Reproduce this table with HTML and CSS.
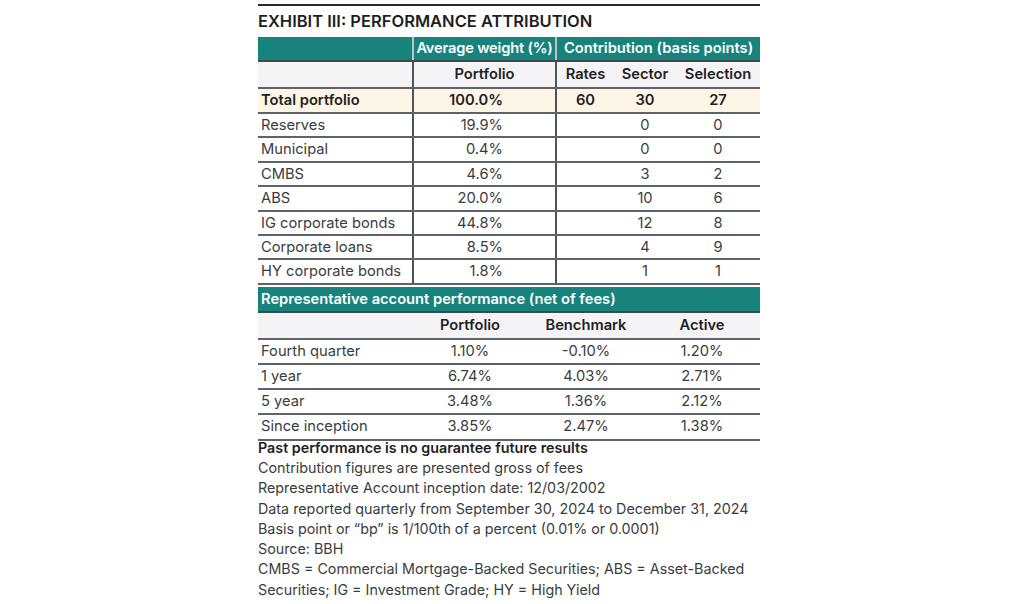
FILE: index.html
```html
<!DOCTYPE html>
<html lang="en">
<head>
<meta charset="utf-8">
<title>Exhibit III: Performance Attribution</title>
<link rel="stylesheet" href="styles.css">
</head>
<body>
<div class="exhibit">
  <h1 class="title">EXHIBIT III: PERFORMANCE ATTRIBUTION</h1>
  <table class="attr">
    <colgroup>
      <col class="c-label"><col class="c-weight"><col class="c-rates"><col class="c-sector"><col class="c-sel">
    </colgroup>
    <thead>
      <tr class="teal">
        <th></th>
        <th class="div tight">Average weight (%)</th>
        <th class="div" colspan="3">Contribution (basis points)</th>
      </tr>
      <tr class="sub">
        <th></th>
        <th class="div num">Portfolio</th>
        <th class="div ctr">Rates</th>
        <th class="ctr">Sector</th>
        <th class="ctr">Selection</th>
      </tr>
    </thead>
    <tbody>
      <tr class="total">
        <td>Total portfolio</td>
        <td class="div num">100.0%</td>
        <td class="div ctr">60</td>
        <td class="ctr">30</td>
        <td class="ctr">27</td>
      </tr>
      <tr><td>Reserves</td><td class="div num">19.9%</td><td class="div ctr"></td><td class="ctr">0</td><td class="ctr">0</td></tr>
      <tr><td>Municipal</td><td class="div num">0.4%</td><td class="div ctr"></td><td class="ctr">0</td><td class="ctr">0</td></tr>
      <tr><td>CMBS</td><td class="div num">4.6%</td><td class="div ctr"></td><td class="ctr">3</td><td class="ctr">2</td></tr>
      <tr><td>ABS</td><td class="div num">20.0%</td><td class="div ctr"></td><td class="ctr">10</td><td class="ctr">6</td></tr>
      <tr><td>IG corporate bonds</td><td class="div num">44.8%</td><td class="div ctr"></td><td class="ctr">12</td><td class="ctr">8</td></tr>
      <tr><td>Corporate loans</td><td class="div num">8.5%</td><td class="div ctr"></td><td class="ctr">4</td><td class="ctr">9</td></tr>
      <tr><td>HY corporate bonds</td><td class="div num">1.8%</td><td class="div ctr"></td><td class="ctr">1</td><td class="ctr">1</td></tr>
    </tbody>
  </table>

  <table class="perf">
    <colgroup>
      <col class="p-label"><col class="p-col"><col class="p-col"><col class="p-col">
    </colgroup>
    <thead>
      <tr class="teal">
        <th colspan="4" class="left">Representative account performance (net of fees)</th>
      </tr>
      <tr class="sub">
        <th></th>
        <th class="ctr">Portfolio</th>
        <th class="ctr">Benchmark</th>
        <th class="ctr">Active</th>
      </tr>
    </thead>
    <tbody>
      <tr><td>Fourth quarter</td><td class="ctr">1.10%</td><td class="ctr">-0.10%</td><td class="ctr">1.20%</td></tr>
      <tr><td>1 year</td><td class="ctr">6.74%</td><td class="ctr">4.03%</td><td class="ctr">2.71%</td></tr>
      <tr><td>5 year</td><td class="ctr">3.48%</td><td class="ctr">1.36%</td><td class="ctr">2.12%</td></tr>
      <tr><td>Since inception</td><td class="ctr">3.85%</td><td class="ctr">2.47%</td><td class="ctr">1.38%</td></tr>
    </tbody>
  </table>

  <div class="notes">
    <p class="strong">Past performance is no guarantee future results</p>
    <p>Contribution figures are presented gross of fees</p>
    <p>Representative Account inception date: 12/03/2002</p>
    <p>Data reported quarterly from September 30, 2024 to December 31, 2024</p>
    <p>Basis point or “bp” is 1/100th of a percent (0.01% or 0.0001)</p>
    <p>Source: BBH</p>
    <p>CMBS = Commercial Mortgage-Backed Securities; ABS = Asset-Backed Securities; IG = Investment Grade; HY = High Yield</p>
  </div>
</div>
</body>
</html>
```

FILE: styles.css
```css
html, body {
  margin: 0;
  padding: 0;
  background: #ffffff;
}

body {
  font-family: Inter, "Liberation Sans", sans-serif;
  color: #333638;
}

.exhibit {
  width: 502px;
  margin-left: 258px;
  padding-top: 4px;
}

.title {
  margin: 0;
  border-top: 2px solid #2a2a2a;
  padding-top: 5px;
  height: 26px;
  font-size: 16.5px;
  font-weight: 600;
  line-height: 20px;
  color: #1e1e1e;
}

table {
  width: 502px;
  border-collapse: collapse;
  table-layout: fixed;
  font-size: 14.7px;
}

th, td {
  padding: 0 3px;
  white-space: nowrap;
}

th {
  font-weight: 600;
  color: #1f2224;
}

td {
  font-weight: 400;
  color: #3a3d40;
}

.c-label { width: 155px; }
.c-weight { width: 143px; }
.c-rates { width: 58px; }
.c-sector { width: 62px; }
.c-sel { width: 84px; }

.p-label { width: 154px; }
.p-col { width: 116px; }

.teal th {
  background: #17837c;
  color: #ffffff;
  height: 23px;
  line-height: 23px;
  text-align: center;
  border-bottom: 2px solid #3f4a4c;
  padding: 0 1px;
}

.teal th.tight {
  letter-spacing: -0.2px;
}

.teal th.left {
  text-align: left;
  padding-left: 3px;
}

.sub th {
  background: #f4f4f7;
  height: 25px;
  line-height: 25px;
  border-bottom: 2px solid #5c6369;
}

.attr tbody td {
  height: 22.4px;
  line-height: 22.4px;
  border-bottom: 2px solid #5c6369;
}

.attr .total td {
  background: #fdf5e6;
  font-weight: 600;
  color: #1f2224;
  height: 23px;
}

.attr .div {
  border-left: 2px solid #4e555a;
}

.attr .teal th.div {
  border-left: 2px solid #b9c6c5;
}

.num {
  text-align: right;
  padding-right: 52px;
}

.attr th.num {
  text-align: center;
  padding-right: 3px;
}

.ctr {
  text-align: center;
}

.perf {
  margin-top: 2px;
}

.perf .teal th {
  height: 24px;
  line-height: 24px;
}

.perf .sub th {
  height: 25px;
  line-height: 25px;
}

.perf tbody td {
  height: 23.2px;
  line-height: 23.2px;
  border-bottom: 2px solid #5c6369;
}

.notes {
  margin-top: -3px;
}

.notes p {
  margin: 0;
  font-size: 14.3px;
  line-height: 20.3px;
  color: #3a3d40;
}

.notes p.strong {
  font-weight: 600;
  color: #1f2224;
}
```
